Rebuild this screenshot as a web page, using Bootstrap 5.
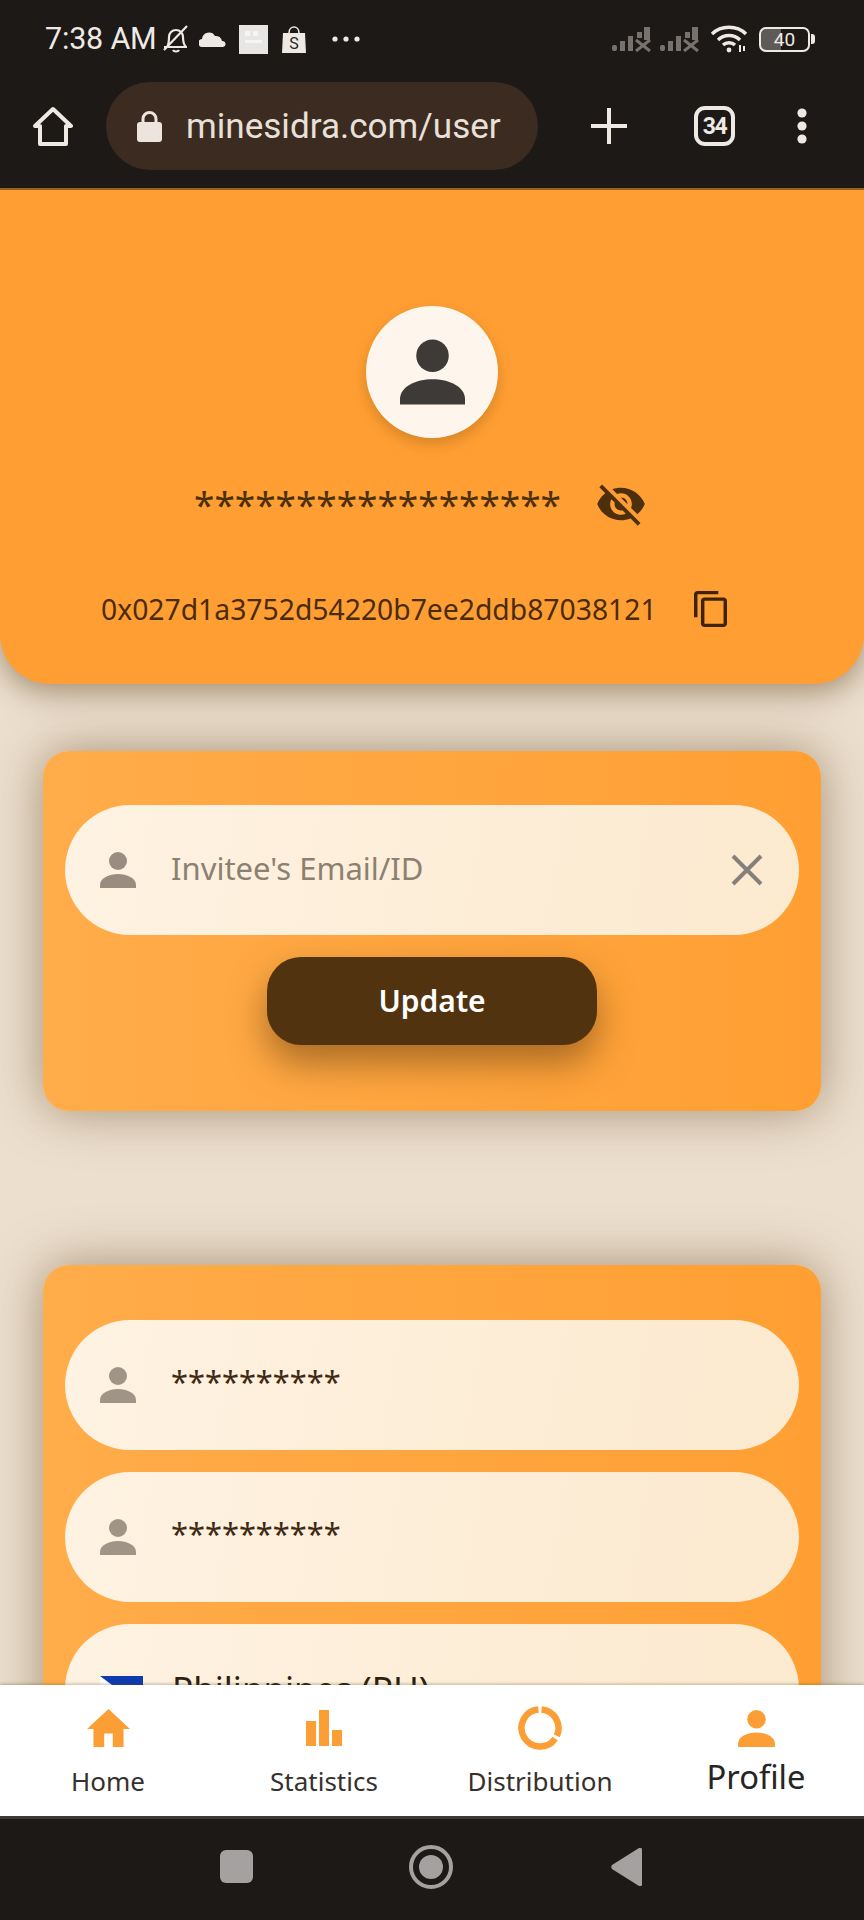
<!DOCTYPE html>
<html lang="en"><head><meta charset="utf-8"><title>Sidra profile</title>
<link href="https://cdn.jsdelivr.net/npm/bootstrap@5.3.0/dist/css/bootstrap.min.css" rel="stylesheet">
<style>
html,body{margin:0;height:1920px;overflow:hidden;background:#1c1917}
.phone{width:864px;height:1920px;font-family:"Noto Sans",sans-serif}
.sysbar{height:78px;background:#1c1917;color:#efe9e4;font-family:Roboto,sans-serif;padding:0 49px 0 45px}
.clock{font-size:30.5px;line-height:1;width:116px;white-space:nowrap;letter-spacing:-.2px}
.toolbar{height:112px;background:#1c1917;padding:0 0 14px 33px;color:#efe9e4;border-bottom:2px solid #9a5f1e}
.urlpill{width:432px;height:88px;margin-left:33px;padding-left:31px;background:#3b2b20;font-family:Roboto,sans-serif;font-size:35.1px;color:#e9e0d9;white-space:nowrap}
.urlpill svg{margin-right:24px}
.tabcount{width:41px;height:40px;border:4px solid #efe9e4;border-radius:11px;font:700 23px/1 Roboto,sans-serif;letter-spacing:-1.5px;margin-left:67px}
.viewport{flex:1 1 auto;min-height:0;overflow:hidden;background:#ecdfce}
.hero{height:494px;background:#ff9f33;border-radius:0 0 50px 50px;box-shadow:0 8px 30px rgba(90,60,20,.5);color:#4d2f0c}
.avatarball{width:132px;height:132px;margin-top:116px;background:#fef6ec;box-shadow:0 6px 14px rgba(120,70,10,.3)}
.secret{margin-top:37px;height:50px;font-size:37px;line-height:50px;width:453px;margin-left:194px;align-self:flex-start}
.secret span{width:400px;margin-top:7px}
.secret svg{margin-top:8px}
.addr{margin-top:64px;font-size:28.3px;line-height:40px;height:40px;padding-left:101px;white-space:nowrap;color:#4a2b0a}
.addr svg{margin-left:37px}
.panel{margin:67px 43px 0;padding:54px 22px 66px;border-radius:26px;background:linear-gradient(90deg,#ffac4a,#ff9f33);box-shadow:0 0 50px rgba(95,65,25,.5)}
.panel.second{margin-top:154px;padding-top:55px}
.fieldpill{height:130px;padding:0 36px 0 35px;background:linear-gradient(100deg,#fef2e2,#fceacf);font-size:31px;color:#8b8072}
.fieldpill+.fieldpill{margin-top:22px}
.fieldpill .ftext{margin-left:35px;margin-top:-4px}
.fieldpill .stars{font-size:30.8px;color:#3f2a14;line-height:1;margin-top:-8px}
.countrytxt{font-size:35px;color:#2e1e0e;margin-left:29px;line-height:1.2;white-space:nowrap}
.updatebtn{display:block;width:330px;height:88px;margin:22px auto 0;padding:0 0 2px;border:0;border-radius:34px;background:#52330f;color:#fff;font-size:30px;font-weight:600;box-shadow:0 18px 36px rgba(85,50,10,.5)}
.updatebtn:hover{background:#52330f;color:#fff}
.botnav{height:131px;background:#fff;box-shadow:0 -1px 3px rgba(90,70,40,.35);position:relative}
.botnav>div{width:216px;padding-top:20px;font-size:26px;color:#35312d}
.iconslot{height:46px}
.botnav .lbl{line-height:36px;margin-top:12px;white-space:nowrap}
.botnav .lbl.on{font-size:32.7px;line-height:40px;margin-top:6px;color:#28241f}
.sysnav{height:104px;background:#1c1917;border-top:3px solid #3c3a38}
</style></head>
<body>
<svg width="0" height="0" class="d-block"><defs>
<symbol id="person" viewBox="0 0 36 36"><circle cx="18" cy="9" r="9"/><path d="M0 36v-3c0-7 9-11 18-11s18 4 18 11v3z"/></symbol>
</defs></svg>
<div class="phone d-flex flex-column">
  <div class="sysbar d-flex flex-shrink-0 align-items-center">
    <span class="clock">7:38 AM</span>
    <svg width="30" height="30" viewBox="0 0 30 30" fill="none" stroke="#efe9e4" stroke-width="2.2"><path d="M3 23h23M6 23c2-3 2-6 2-10 0-4 3-7 7-7s7 3 7 7c0 4 0 7 3 10M12 26c1 2 5 2 6 0M3 26 26 2"/></svg>
    <svg width="28" height="15" viewBox="0 0 28 15" fill="#efe9e4" class="ms-2"><path d="M4 15a4 4 0 0 1-1-8 7 7 0 0 1 13-3 6 6 0 0 1 7 5 3 3 0 0 1 1 6z"/></svg>
    <svg width="29" height="29" viewBox="0 0 29 29" style="margin-left:12px"><rect width="29" height="29" fill="#e8e6e4"/><rect x="6" y="6" width="5" height="5" fill="#f6f5f4"/><rect x="14" y="6" width="5" height="5" fill="#f6f5f4"/><rect x="6" y="15" width="17" height="3" fill="#f6f5f4"/></svg>
    <svg width="24" height="27" viewBox="0 0 24 27" style="margin-left:14px"><path d="M1 7h22l1 20H0z" fill="#efe9e4"/><path d="M7 7c0-8 10-8 10 0" fill="none" stroke="#efe9e4" stroke-width="1.6"/><text x="12" y="23" text-anchor="middle" font-family="Roboto,sans-serif" font-size="16" fill="#2b2723">S</text></svg>
    <svg width="28" height="6" viewBox="0 0 28 6" fill="#efe9e4" style="margin-left:26px"><circle cx="3" cy="3" r="2.6"/><circle cx="14" cy="3" r="2.6"/><circle cx="25" cy="3" r="2.6"/></svg>
    <div class="ms-auto d-flex align-items-center">
      <svg width="40" height="25" viewBox="0 0 40 25" fill="#77726e"><rect x="0" y="18" width="5" height="6" rx="2"/><rect x="8" y="14" width="5" height="10"/><rect x="16" y="9" width="5" height="15"/><rect x="32" y="0" width="6" height="13"/><path d="M24 13l14 11M38 13 24 24" stroke="#77726e" stroke-width="3"/><rect x="25" y="5" width="5" height="6"/></svg>
      <svg width="40" height="25" viewBox="0 0 40 25" fill="#77726e" style="margin-left:8px"><rect x="0" y="18" width="5" height="6" rx="2"/><rect x="8" y="14" width="5" height="10"/><rect x="16" y="9" width="5" height="15"/><rect x="32" y="0" width="6" height="13"/><path d="M24 13l14 11M38 13 24 24" stroke="#77726e" stroke-width="3"/><rect x="25" y="5" width="5" height="6"/></svg>
      <svg width="38" height="28" viewBox="0 0 38 28" fill="none" stroke="#efe9e4" stroke-width="3.4" style="margin-left:10px"><path d="M2 9c9-9 25-9 34 0M8 15c6-6 16-6 22 0M13 20c3-3 9-3 12 0"/><circle cx="19" cy="25" r="2.4" fill="#efe9e4" stroke="none"/><path d="M30 20v7M34 21v5" stroke-width="2"/></svg>
      <div class="d-flex align-items-center" style="margin-left:11px">
        <div class="d-flex align-items-center justify-content-center" style="width:51px;height:25px;border:2.5px solid #efe9e4;border-radius:7px;background:linear-gradient(90deg,#5e5a57 42%,transparent 42%);font-size:19px;line-height:1;color:#efe9e4">40</div>
        <div style="width:4px;height:10px;background:#efe9e4;border-radius:0 3px 3px 0;margin-left:1px"></div>
      </div>
    </div>
  </div>
  <div class="toolbar d-flex flex-shrink-0 align-items-center">
    <svg width="40" height="41" viewBox="0 0 40 41" fill="none" stroke="#efe9e4" stroke-width="4" stroke-linejoin="round"><path d="M2 20 20 3l18 17h-5v18H7V20z"/></svg>
    <div class="urlpill rounded-pill d-flex align-items-center">
      <svg width="25" height="31" viewBox="0 0 25 31" fill="#ece4dd"><path d="M6 13V8a6.500 6.500 0 0 1 13 0v5" fill="none" stroke="#ece4dd" stroke-width="3"/><rect y="11" width="25" height="20" rx="3"/></svg>
      <span>minesidra.com/user</span>
    </div>
    <svg width="36" height="36" viewBox="0 0 36 36" stroke="#efe9e4" stroke-width="4" style="margin-left:53px"><path d="M0 18h36M18 0v36"/></svg>
    <div class="tabcount d-flex align-items-center justify-content-center">34</div>
    <svg width="14" height="36" viewBox="0 0 14 36" fill="#efe9e4" style="margin-left:60px"><circle cx="7" cy="5" r="4.600"/><circle cx="7" cy="18" r="4.600"/><circle cx="7" cy="31" r="4.600"/></svg>
  </div>
  <div class="viewport">
    <section class="hero d-flex flex-column align-items-center">
      <div class="avatarball rounded-circle d-flex align-items-center justify-content-center">
        <svg width="65" height="66" fill="#3d3a37"><use href="#person"/></svg>
      </div>
      <div class="secret d-flex align-items-center justify-content-between">
        <span class="d-block">******************</span>
        <svg width="52" height="52" viewBox="0 0 24 24" fill="#4d2f0c" class="flex-shrink-0"><path d="M12 7c2.760 0 5 2.240 5 5 0 .65-.13 1.260-.36 1.830l2.920 2.920c1.510-1.260 2.700-2.890 3.430-4.750-1.730-4.390-6-7.500-11-7.500-1.400 0-2.740.25-3.980.7l2.160 2.160C10.740 7.130 11.350 7 12 7zM2 4.270l2.280 2.280.46.46C3.080 8.300 1.780 10.020 1 12c1.730 4.390 6 7.500 11 7.500 1.550 0 3.030-.3 4.380-.84l.42.42L19.730 22 21 20.730 3.270 3 2 4.270zM7.530 9.800l1.550 1.550c-.05.21-.08.43-.08.65 0 1.660 1.340 3 3 3 .22 0 .44-.03.65-.08l1.550 1.550c-.67.33-1.410.53-2.200.53-2.760 0-5-2.240-5-5 0-.79.2-1.530.53-2.200zm4.310-.78l3.150 3.150.02-.16c0-1.660-1.340-3-3-3l-.17.01z"/></svg>
      </div>
      <div class="addr align-self-stretch d-flex align-items-center">
        <span>0x027d1a3752d54220b7ee2ddb87038121</span>
        <svg width="33" height="36" viewBox="2 1 19 22" fill="#3d2409" preserveAspectRatio="none"><path d="M16 1H4c-1.100 0-2 .9-2 2v14h2V3h12V1zm3 4H8c-1.100 0-2 .9-2 2v14c0 1.100.9 2 2 2h11c1.100 0 2-.9 2-2V7c0-1.100-.9-2-2-2zm0 16H8V7h11v14z"/></svg>
      </div>
    </section>
    <section class="panel">
      <div class="fieldpill rounded-pill d-flex align-items-center">
        <svg width="36" height="36" fill="#9a8d80" class="flex-shrink-0"><use href="#person"/></svg>
        <span class="ftext flex-grow-1">Invitee's Email/ID</span>
        <svg width="32" height="32" viewBox="0 0 32 32" stroke="#85807a" stroke-width="4"><path d="M2 2l28 28M30 2 2 30"/></svg>
      </div>
      <button type="button" class="btn updatebtn">Update</button>
    </section>
    <section class="panel second">
      <div class="fieldpill rounded-pill d-flex align-items-center">
        <svg width="36" height="36" fill="#a09486" class="flex-shrink-0"><use href="#person"/></svg>
        <span class="ftext stars">**********</span>
      </div>
      <div class="fieldpill rounded-pill d-flex align-items-center">
        <svg width="36" height="36" fill="#a09486" class="flex-shrink-0"><use href="#person"/></svg>
        <span class="ftext stars">**********</span>
      </div>
      <div class="fieldpill rounded-pill d-flex align-items-center">
        <svg width="43" height="30" viewBox="0 0 43 30" class="flex-shrink-0" style="margin-top:4px"><rect width="43" height="15" fill="#0f3bb0"/><rect y="15" width="43" height="15" fill="#ce1126"/><path d="M0 0l20 15L0 30z" fill="#fff"/></svg>
        <span class="countrytxt">Philippines (PH)</span>
      </div>
    </section>
  </div>
  <nav class="botnav d-flex flex-shrink-0 text-center">
    <div>
      <div class="iconslot d-flex align-items-center justify-content-center"><svg width="43" height="38" viewBox="2 3 20 17" preserveAspectRatio="none" fill="#fa9e35"><path d="M10 20v-6h4v6h5v-8h3L12 3 2 12h3v8z"/></svg></div>
      <div class="lbl">Home</div>
    </div>
    <div>
      <div class="iconslot d-flex align-items-center justify-content-center"><svg width="36" height="36" viewBox="0 0 36 36" fill="#fa9e35"><rect y="11" width="10" height="25"/><rect x="13" width="10" height="36"/><rect x="26" y="20" width="10" height="16"/></svg></div>
      <div class="lbl">Statistics</div>
    </div>
    <div>
      <div class="iconslot d-flex align-items-center justify-content-center"><svg width="44" height="44" viewBox="0 0 44 44" fill="none" stroke="#fa9e35" stroke-width="6.500"><path d="M23.500 3.560A18.500 18.500 0 0 1 38.800 29.800"/><path d="M37.150 32.600A18.500 18.500 0 1 1 20.500 3.560"/></svg></div>
      <div class="lbl">Distribution</div>
    </div>
    <div>
      <div class="iconslot d-flex align-items-center justify-content-center"><svg width="37" height="37" fill="#fa9e35"><use href="#person"/></svg></div>
      <div class="lbl on">Profile</div>
    </div>
  </nav>
  <div class="sysnav d-flex flex-shrink-0 align-items-center" style="padding-bottom:6px">
    <svg width="33" height="33" viewBox="0 0 33 33" fill="#a5a1a1" style="margin-left:220px"><rect width="33" height="33" rx="6"/></svg>
    <svg width="44" height="44" viewBox="0 0 44 44" style="margin-left:156px"><circle cx="22" cy="22" r="20" fill="none" stroke="#a5a1a1" stroke-width="4"/><circle cx="22" cy="22" r="12" fill="#a5a1a1"/></svg>
    <svg width="31" height="38" viewBox="0 0 31 38" fill="#a5a1a1" style="margin-left:158px"><path d="M1 17 28 0c2-1 3 0 3 2v34c0 2-1 3-3 2L1 21c-1-1-1-3 0-4z"/></svg>
  </div>
</div>
<script src="https://cdn.jsdelivr.net/npm/bootstrap@5.3.0/dist/js/bootstrap.bundle.min.js"></script>
</body></html>
